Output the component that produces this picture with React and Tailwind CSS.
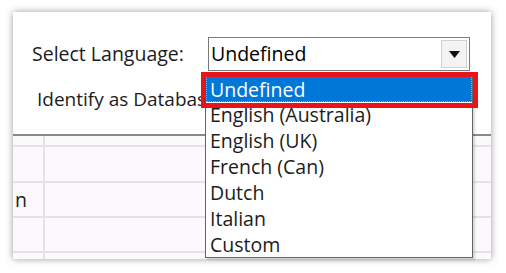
import React from "react";

const languages = [
  "Undefined",
  "English (Australia)",
  "English (UK)",
  "French (Can)",
  "Dutch",
  "Italian",
  "Custom",
];

const font = { fontFamily: '"Open Sans", "Noto Sans", sans-serif' };

const GridRow = ({ children, h }) => (
  <div className={`flex ${h} border-b-2 border-[#e4e2e4]`}>
    <div className="w-[32px] shrink-0 border-r-2 border-[#e4e2e4] flex items-center overflow-hidden">
      {children}
    </div>
    <div className="flex-1" />
  </div>
);

export default function App() {
  return (
    <div className="w-[506px] h-[273px] bg-white pt-[12px] pl-[13px]" style={font}>
      <div className="relative w-[478px] h-[247px] bg-white shadow-[0_0_7px_rgba(0,0,0,0.4)] text-[19.5px] text-[#1c1c1c]">
        {/* top form */}
        <div className="h-[122px] pt-[25px]">
          <div className="flex items-center pl-[19px]">
            <span className="w-[176px] leading-[34px]">Select Language:</span>
            <div className="w-[262px] h-[34px] flex border border-[#7a7a7a] bg-white">
              <span className="flex-1 pl-[2px] leading-[32px] text-black">Undefined</span>
              <div className="w-[26px] m-[2px] bg-[#f3f3f3] border border-[#d0d0d0] flex items-center justify-center">
                <svg width="11" height="7" viewBox="0 0 11 7">
                  <path d="M0 0 H11 L5.5 7 Z" fill="#111" />
                </svg>
              </div>
            </div>
          </div>
          <div className="pl-[24px] mt-[16px] leading-[24px] text-[19px]">Identify as Database</div>
        </div>

        {/* separator */}
        <div className="h-[2px] bg-[#8a8a8a]" />

        {/* grid */}
        <div className="h-[123px] bg-[#fcf9fc] overflow-hidden">
          <GridRow h="h-[11px]" />
          <GridRow h="h-[36px]" />
          <GridRow h="h-[35px]">
            <span className="pl-[2px] leading-none">n</span>
          </GridRow>
          <GridRow h="h-[35px]" />
          <GridRow h="h-[35px]" />
        </div>

        {/* open dropdown list */}
        <div className="absolute left-[192px] top-[60px] w-[268px] h-[186px] bg-white border border-[#646464] pt-[3px] shadow-[2px_2px_2px_rgba(0,0,0,0.15)]">
          {languages.map((lang, i) => (
            <div
              key={lang}
              className={
                i === 0
                  ? "h-[26px] pl-[3px] leading-[25px] bg-[#0078d7] text-white border border-dotted border-[#7fb2e0]"
                  : "h-[26px] pl-[4px] leading-[26px] text-[#1c1c1c]"
              }
            >
              {lang}
            </div>
          ))}
        </div>

        {/* red highlight annotation */}
        <div className="absolute left-[188px] top-[60px] w-[277px] h-[36px] border-[5px] border-[#e8141c]" />
      </div>
    </div>
  );
}
